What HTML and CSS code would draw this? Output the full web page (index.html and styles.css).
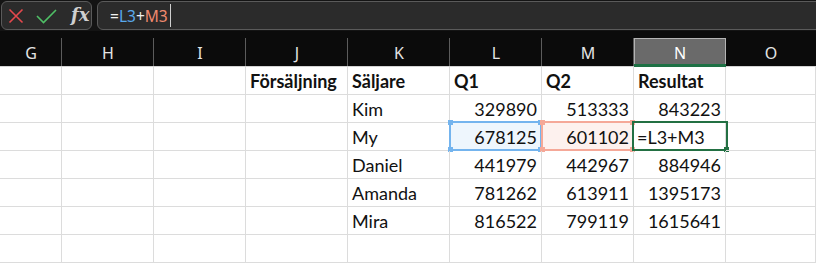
FILE: index.html
```html
<!DOCTYPE html>
<html lang="sv">
<head>
    <meta charset="UTF-8">
    <meta name="viewport" content="width=device-width, initial-scale=1.0">
    <title>Försäljning</title>
    <link rel="stylesheet" href="styles.css">
</head>
<body>
    <div class="topbar">
        <div class="box actions">
            <svg class="icon" width="16" height="16" viewBox="0 0 16 16">
                <path d="M1.5 1.5 L14.5 14.5 M14.5 1.5 L1.5 14.5" stroke="#e5484d" stroke-width="1.6" fill="none"/>
            </svg>
            <svg class="icon" width="21" height="16" viewBox="0 0 21 16">
                <path d="M1 8 L7.5 14.5 L20 2" stroke="#4fbf66" stroke-width="1.6" fill="none"/>
            </svg>
            <span class="fx">fx</span>
        </div>
        <div class="box formula">
            <span class="eq">=</span><span class="ref-l">L3</span><span class="eq">+</span><span class="ref-m">M3</span><span class="caret"></span>
        </div>
    </div>

    <div class="sheet">
        <!-- kolumnrubriker -->
        <div class="hd">G</div>
        <div class="hd">H</div>
        <div class="hd">I</div>
        <div class="hd">J</div>
        <div class="hd">K</div>
        <div class="hd">L</div>
        <div class="hd">M</div>
        <div class="hd active">N</div>
        <div class="hd last">O</div>

        <div class="c"></div>
        <div class="c"></div>
        <div class="c"></div>
        <div class="c b">Försäljning</div>
        <div class="c b">Säljare</div>
        <div class="c b">Q1</div>
        <div class="c b">Q2</div>
        <div class="c b">Resultat</div>
        <div class="c"></div>

        <div class="c"></div>
        <div class="c"></div>
        <div class="c"></div>
        <div class="c"></div>
        <div class="c">Kim</div>
        <div class="c num">329890</div>
        <div class="c num">513333</div>
        <div class="c num">843223</div>
        <div class="c"></div>

        <div class="c"></div>
        <div class="c"></div>
        <div class="c"></div>
        <div class="c"></div>
        <div class="c">My</div>
        <div class="c num ref-cell-l">678125
            <span class="sel sel-l"><i class="h tl"></i><i class="h tr"></i><i class="h bl"></i><i class="h br"></i></span>
        </div>
        <div class="c num ref-cell-m">601102
            <span class="sel sel-m"><i class="h tl"></i><i class="h tr"></i><i class="h bl"></i><i class="h br"></i></span>
        </div>
        <div class="c edit">=L3+M3
            <span class="sel sel-n"><i class="h br"></i></span>
        </div>
        <div class="c"></div>

        <div class="c"></div>
        <div class="c"></div>
        <div class="c"></div>
        <div class="c"></div>
        <div class="c">Daniel</div>
        <div class="c num">441979</div>
        <div class="c num">442967</div>
        <div class="c num">884946</div>
        <div class="c"></div>

        <div class="c"></div>
        <div class="c"></div>
        <div class="c"></div>
        <div class="c"></div>
        <div class="c">Amanda</div>
        <div class="c num">781262</div>
        <div class="c num">613911</div>
        <div class="c num">1395173</div>
        <div class="c"></div>

        <div class="c"></div>
        <div class="c"></div>
        <div class="c"></div>
        <div class="c"></div>
        <div class="c">Mira</div>
        <div class="c num">816522</div>
        <div class="c num">799119</div>
        <div class="c num">1615641</div>
        <div class="c"></div>

        <div class="c"></div>
        <div class="c"></div>
        <div class="c"></div>
        <div class="c"></div>
        <div class="c"></div>
        <div class="c"></div>
        <div class="c"></div>
        <div class="c"></div>
        <div class="c"></div>
    </div>
</body>
</html>
```

FILE: styles.css
```css
body {
    margin: 0;
    padding: 0;
    background-color: #ffffff;
    font-family: 'Lato', 'Open Sans', sans-serif;
    overflow: hidden;
}

/* formelfältet */
.topbar {
    height: 31px;
    background-color: #141414;
    display: flex;
    gap: 5px;
    padding: 1px 0 0 1px;
    box-sizing: border-box;
}

.box {
    height: 29px;
    box-sizing: border-box;
    border: 1px solid #5a5a5a;
    border-radius: 6px;
    background-color: #2b2b2b;
    display: flex;
    align-items: center;
}

.actions {
    width: 91px;
    padding-left: 6px;
    gap: 12px;
}

.icon {
    display: block;
}

.fx {
    font-family: 'DejaVu Serif', 'Liberation Serif', serif;
    font-style: italic;
    font-weight: bold;
    font-size: 18px;
    color: #cfcfcf;
    margin-left: 2px;
    margin-top: -3px;
}

.formula {
    flex: 1;
    margin-right: -10px;
    padding-left: 12px;
    font-family: 'Noto Sans', sans-serif;
    font-size: 15.5px;
    color: #f0f0f0;
}

.ref-l {
    color: #59a9ec;
}

.ref-m {
    color: #f08a6e;
}

.caret {
    display: inline-block;
    width: 1px;
    height: 23px;
    background-color: #cfcfcf;
    margin-left: 2px;
}

/* kalkylbladet */
.sheet {
    display: grid;
    grid-template-columns: 62px 92px 92px 102px 102px 92px 92px 92px 1fr;
    grid-auto-rows: 28px;
    grid-template-rows: 36px;
}

.hd {
    background-color: #0b0b0b;
    color: #e4e4e4;
    font-family: 'Noto Sans', sans-serif;
    font-size: 16px;
    display: flex;
    align-items: center;
    justify-content: center;
    padding-top: 8px;
    box-sizing: border-box;
    background-image: linear-gradient(#5c5c5c, #5c5c5c);
    background-size: 1px 28px;
    background-position: right bottom;
    background-repeat: no-repeat;
    border-bottom: 1px solid #d4d4d4;
}

.hd.last {
    background-image: none;
}

.hd.active {
    position: relative;
    z-index: 0;
    color: #ffffff;
    background-image: linear-gradient(#b4b4b4, #b4b4b4);
    background-size: 100% 28px;
    background-position: bottom;
    border-bottom-color: #1e7145;
}

.hd.active::before {
    content: "";
    position: absolute;
    z-index: -1;
    left: 1px;
    right: 1px;
    top: 8px;
    bottom: 2px;
    background-color: #6a6a6a;
}

.hd.active::after {
    content: "";
    position: absolute;
    z-index: -1;
    left: 0;
    right: 0;
    bottom: 0;
    height: 2px;
    background-color: #1e7145;
}

.c {
    position: relative;
    box-sizing: border-box;
    border-right: 1px solid #dcdcdc;
    border-bottom: 1px solid #dcdcdc;
    padding: 0 4px 2px 4px;
    display: flex;
    align-items: flex-end;
    font-size: 18px;
    line-height: 22px;
    color: #111;
    white-space: nowrap;
}

.b {
    font-weight: bold;
}

.num {
    justify-content: flex-end;
}

.ref-cell-l {
    background-color: #eef6fd;
}

.ref-cell-m {
    background-color: #fdf1ee;
}

.edit {
    padding-left: 3px;
}

/* markeringar */
.sel {
    position: absolute;
    left: -1px;
    top: -2px;
    right: -1px;
    bottom: -1px;
    border: 2px solid;
    pointer-events: none;
}

.sel-l {
    border-color: #74b4ee;
}

.sel-m {
    border-color: #f5a898;
}

.sel-n {
    left: -2px;
    right: -3px;
    border-color: #237043;
}

.h {
    position: absolute;
    width: 5px;
    height: 5px;
}

.sel-l .h {
    background-color: #74b4ee;
}

.sel-m .h {
    background-color: #f5a898;
}

.sel-n .h {
    background-color: #237043;
}

.tl { left: -3px; top: -3px; }
.tr { right: -3px; top: -3px; }
.bl { left: -3px; bottom: -3px; }
.br { right: -3px; bottom: -3px; }
```
